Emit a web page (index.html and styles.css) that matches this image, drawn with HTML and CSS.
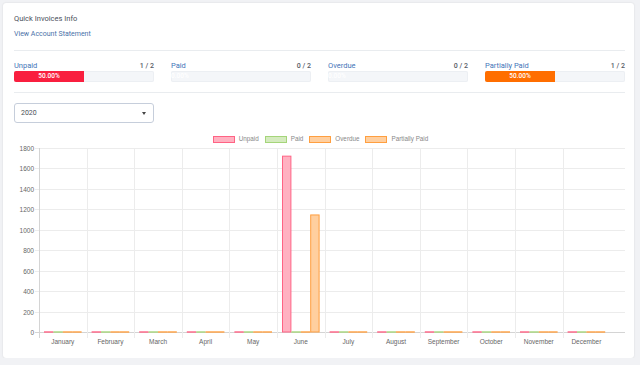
FILE: index.html
```html
<!DOCTYPE html>
<html lang="en">
<head>
    <meta charset="UTF-8">
    <title>Quick Invoices Info</title>
    <link rel="stylesheet" href="styles.css">
</head>
<body>
<div class="card">
    <div class="title">Quick Invoices Info</div>
    <a class="link" href="#">View Account Statement</a>
    <div class="sep"></div>
    <div class="stats">
        <div class="stat">
            <div class="stat-head"><span class="stat-name">Unpaid</span><span class="stat-count">1 / 2</span></div>
            <div class="track"><div class="fill red" style="width:50%">50.00%</div></div>
        </div>
        <div class="stat">
            <div class="stat-head"><span class="stat-name">Paid</span><span class="stat-count">0 / 2</span></div>
            <div class="track"><div class="fill empty">0.00%</div></div>
        </div>
        <div class="stat">
            <div class="stat-head"><span class="stat-name">Overdue</span><span class="stat-count">0 / 2</span></div>
            <div class="track"><div class="fill empty">0.00%</div></div>
        </div>
        <div class="stat">
            <div class="stat-head"><span class="stat-name">Partially Paid</span><span class="stat-count">1 / 2</span></div>
            <div class="track"><div class="fill orange" style="width:50%">50.00%</div></div>
        </div>
    </div>
    <div class="sep"></div>
    <div class="select"><span>2020</span><span class="caret"></span></div>

    <div class="legend">
        <div class="legend-item"><span class="swatch sw-unpaid"></span>Unpaid</div>
        <div class="legend-item"><span class="swatch sw-paid"></span>Paid</div>
        <div class="legend-item"><span class="swatch sw-over"></span>Overdue</div>
        <div class="legend-item"><span class="swatch sw-over"></span>Partially Paid</div>
    </div>

    <svg class="chart" id="chart" width="611" height="205" viewBox="0 0 611 205"></svg>
</div>
<script>
(function() {
    var svg = document.getElementById('chart');
    var NS = 'http://www.w3.org/2000/svg';
    var plotLeft = 25, plotTop = 4, plotBottom = 188, plotRight = 611, cw = 47.6;
    var months = ['January','February','March','April','May','June','July','August','September','October','November','December'];
    // unpaid, paid, overdue, partial
    var data = months.map(function(m, i) { return i === 5 ? [1725, 0, 0, 1150] : [0, 0, 0, 0]; });
    var fills = ['#ffb1c1', '#d5ebbf', '#ffcf9f', '#ffcf9f'];
    var strokes = ['#ff6384', '#a5d57a', '#ff9f40', '#ff9f40'];

    function el(name, attrs, text) {
        var e = document.createElementNS(NS, name);
        for (var k in attrs) e.setAttribute(k, attrs[k]);
        if (text) e.textContent = text;
        svg.appendChild(e);
        return e;
    }
    function yPos(v) { return plotBottom - (plotBottom - plotTop) * v / 1800; }

    // horizontal grid + y labels
    for (var v = 0; v <= 1800; v += 200) {
        var yy = Math.round(yPos(v)) + 0.5;
        el('line', {x1: 21, x2: plotRight, y1: yy, y2: yy, stroke: v === 0 ? '#d4d4d4' : '#ececec', 'stroke-width': 1});
        el('text', {x: 20, y: yy + 2.3, 'text-anchor': 'end', 'class': 'tick'}, String(v));
    }
    // vertical grid + x labels
    for (var i = 0; i < 12; i++) {
        var xx = Math.round(plotLeft + cw * i) + 0.5;
        el('line', {x1: xx, x2: xx, y1: plotTop, y2: plotBottom + 6, stroke: i === 0 ? '#d4d4d4' : '#ececec', 'stroke-width': 1});
        el('text', {x: plotLeft + cw * i + cw / 2, y: 199.5, 'text-anchor': 'middle', 'class': 'tick'}, months[i]);
    }
    // bars
    data.forEach(function(vals, i) {
        vals.forEach(function(val, j) {
            var bx = plotLeft + cw * i + 5 + j * 9.4;
            if (val > 0) {
                el('rect', {x: bx + 0.5, y: yPos(val) + 0.5, width: 8.4, height: plotBottom - yPos(val) - 0.5, fill: fills[j], stroke: strokes[j], 'stroke-width': 1});
            } else {
                el('rect', {x: bx, y: plotBottom - 1, width: 9.4, height: 2, fill: strokes[j], opacity: 0.7});
            }
        });
    });
})();
</script>
</body>
</html>
```

FILE: styles.css
```css
body { margin: 0; background: #f1f2f5; font-family: Roboto, "Liberation Sans", Arial, sans-serif; }
.card { margin: 3px 6px 0 3px; height: 355px; box-sizing: border-box; padding: 10px 9px 0 11px; background: #fff; border-radius: 3px; box-shadow: 0 0 2px rgba(0,0,0,0.12); }
.title { font-size: 7.5px; line-height: 12px; color: #4a505a; }
.link { display: block; margin-top: 3px; font-size: 7px; line-height: 12px; color: #4a72a8; text-decoration: none; }
.sep { height: 1px; background: #e9ecef; margin-top: 10px; }
.stats { display: grid; grid-template-columns: repeat(4, 1fr); column-gap: 17px; margin-top: 10px; }
.stat-head { display: flex; justify-content: space-between; height: 10px; line-height: 10px; font-size: 7.5px; }
.stat-name { color: #3f74b8; }
.stat-count { color: #555b66; font-weight: 500; font-size: 7px; }
.track { height: 11px; background: #f4f6f9; border-radius: 2px; overflow: hidden; box-shadow: inset 0 0 0 1px #eceff3; }
.fill { height: 100%; font-size: 6.5px; line-height: 11px; color: #fff; text-align: center; font-weight: 500; }
.fill.red { background: #f91f3f; }
.fill.orange { background: #ff6e00; }
.fill.empty { width: 0; overflow: visible; white-space: nowrap; text-align: left; }
.select { display: flex; justify-content: space-between; align-items: center; box-sizing: border-box; width: 140px; height: 20px; margin-top: 10px; padding: 0 7px 0 6px; border: 1px solid #c6cedb; border-radius: 3px; font-size: 7px; color: #495057; }
.caret { width: 0; height: 0; border-left: 2.5px solid transparent; border-right: 2.5px solid transparent; border-top: 3px solid #444; }
.legend { display: flex; justify-content: center; gap: 6px; margin-top: 12px; padding-left: 2px; height: 8px; font-family: "Liberation Sans", Arial, sans-serif; font-size: 6.3px; line-height: 8px; color: #888; }
.legend-item { display: flex; align-items: center; gap: 4px; }
.swatch { display: block; width: 20px; height: 5px; border: 1px solid; }
.sw-unpaid { background: #ffb1c1; border-color: #ff6384; }
.sw-paid { background: #d5ebbf; border-color: #a5d57a; }
.sw-over { background: #ffcf9f; border-color: #ff9f40; }
.chart { display: block; margin-top: 1px; font-family: "Liberation Sans", Arial, sans-serif; }
.tick { font-size: 6.5px; fill: #666; }
```
